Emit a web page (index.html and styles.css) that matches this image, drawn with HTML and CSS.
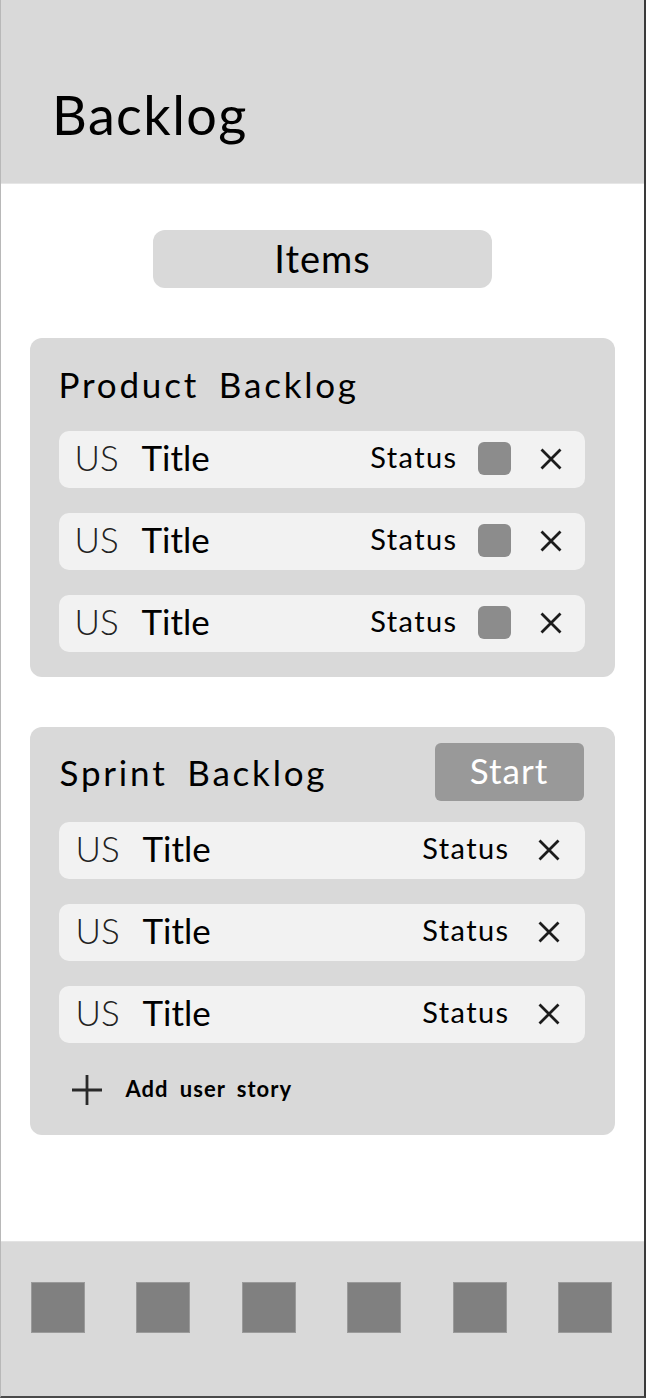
FILE: index.html
```html
<!DOCTYPE html>
<html lang="en">
<head>
<meta charset="utf-8">
<title>Backlog</title>
<link rel="stylesheet" href="styles.css">
</head>
<body>
<div class="frame">
  <header class="topbar">
    <h1 class="page-title">Backlog</h1>
  </header>

  <main class="content">
    <div class="tab-pill">Items</div>

    <section class="card product">
      <h2 class="card-title">Product Backlog</h2>
      <div class="rows">
        <div class="row">
          <span class="us">US</span><span class="title">Title</span>
          <span class="status">Status</span><span class="status-box"></span>
          <svg class="close" viewBox="0 0 22 22"><path d="M1.5 1.5L20.5 20.5M20.5 1.5L1.5 20.5"/></svg>
        </div>
        <div class="row">
          <span class="us">US</span><span class="title">Title</span>
          <span class="status">Status</span><span class="status-box"></span>
          <svg class="close" viewBox="0 0 22 22"><path d="M1.5 1.5L20.5 20.5M20.5 1.5L1.5 20.5"/></svg>
        </div>
        <div class="row">
          <span class="us">US</span><span class="title">Title</span>
          <span class="status">Status</span><span class="status-box"></span>
          <svg class="close" viewBox="0 0 22 22"><path d="M1.5 1.5L20.5 20.5M20.5 1.5L1.5 20.5"/></svg>
        </div>
      </div>
    </section>

    <section class="card sprint">
      <div class="card-head">
        <h2 class="card-title">Sprint Backlog</h2>
        <button class="start-btn">Start</button>
      </div>
      <div class="rows">
        <div class="row sprint-row">
          <span class="us">US</span><span class="title">Title</span>
          <span class="status">Status</span>
          <svg class="close" viewBox="0 0 22 22"><path d="M1.5 1.5L20.5 20.5M20.5 1.5L1.5 20.5"/></svg>
        </div>
        <div class="row sprint-row">
          <span class="us">US</span><span class="title">Title</span>
          <span class="status">Status</span>
          <svg class="close" viewBox="0 0 22 22"><path d="M1.5 1.5L20.5 20.5M20.5 1.5L1.5 20.5"/></svg>
        </div>
        <div class="row sprint-row">
          <span class="us">US</span><span class="title">Title</span>
          <span class="status">Status</span>
          <svg class="close" viewBox="0 0 22 22"><path d="M1.5 1.5L20.5 20.5M20.5 1.5L1.5 20.5"/></svg>
        </div>
      </div>
      <div class="add-row">
        <svg class="plus" viewBox="0 0 30 30"><path d="M15 0V30M0 15H30"/></svg>
        <span class="add-label">Add user story</span>
      </div>
    </section>
  </main>

  <nav class="bottom-nav">
    <span class="nav-item"></span>
    <span class="nav-item"></span>
    <span class="nav-item"></span>
    <span class="nav-item"></span>
    <span class="nav-item"></span>
    <span class="nav-item"></span>
  </nav>
</div>
</body>
</html>
```

FILE: styles.css
```css
* { box-sizing: border-box; }

html, body {
  margin: 0;
  padding: 0;
  background: #ffffff;
}

body {
  font-family: "Lato", "Open Sans", sans-serif;
  color: #000;
}

.frame {
  width: 646px;
  height: 1398px;
  display: flex;
  flex-direction: column;
  border-left: 1px solid #b8b8b8;
  border-right: 2px solid #3a3a3a;
  border-bottom: 2px solid #4a4a4a;
  background: #fff;
  overflow: hidden;
}

.topbar {
  height: 184px;
  background: #d9d9d9;
  border-bottom: 1px solid #e6e6e6;
  padding: 88px 0 0 51px;
  flex: none;
}

.page-title {
  margin: 0;
  font-size: 54px;
  line-height: 54px;
  font-weight: 400;
  letter-spacing: 1.4px;
}

.content {
  flex: 1;
  display: flex;
  flex-direction: column;
  align-items: center;
  padding-top: 46px;
}

.tab-pill {
  width: 339px;
  height: 58px;
  border-radius: 12px;
  background: #d9d9d9;
  display: flex;
  align-items: center;
  justify-content: center;
  font-size: 38px;
  font-weight: 400;
  letter-spacing: 1px;
  padding-bottom: 3px;
}

.card {
  width: 585px;
  background: #d9d9d9;
  border-radius: 12px;
  margin-left: -1px;
  padding: 0 30px 0 29px;
}

.product {
  margin-top: 50px;
  padding-top: 24px;
  padding-bottom: 25px;
}

.sprint {
  margin-top: 50px;
  padding-top: 16px;
  padding-bottom: 23px;
}

.card-title {
  margin: 0;
  font-size: 35px;
  line-height: 44px;
  font-weight: 400;
  letter-spacing: 2.8px;
  word-spacing: 8px;
}

.product .card-title {
  margin-bottom: 25px;
}

.card-head {
  display: flex;
  align-items: center;
  justify-content: space-between;
  margin-bottom: 21px;
}

.card-head .card-title {
  padding-left: 1px;
}

.start-btn {
  width: 149px;
  height: 58px;
  border: none;
  border-radius: 6px;
  background: #999999;
  color: #ffffff;
  font-family: inherit;
  font-size: 35px;
  font-weight: 400;
  letter-spacing: 1px;
  padding: 0 0 5px;
  margin-right: 1px;
}

.rows {
  display: flex;
  flex-direction: column;
  gap: 25px;
}

.row {
  height: 57px;
  background: #f2f2f2;
  border-radius: 10px;
  display: flex;
  align-items: center;
  padding: 0 23px 2px 16px;
}

.row > span {
  position: relative;
  top: -2px;
}

.row > .status-box {
  top: 0;
}

.sprint-row {
  padding: 0 25px 2px 17px;
}

.us {
  width: 67px;
  font-size: 35px;
  font-weight: 300;
  color: #222;
}

.title {
  flex: 1;
  font-size: 35px;
  font-weight: 400;
}

.status {
  font-size: 29px;
  font-weight: 400;
  letter-spacing: 1.4px;
}

.status-box {
  width: 33px;
  height: 33px;
  border-radius: 6px;
  background: #8c8c8c;
  margin-left: 20px;
}

.close {
  width: 22px;
  height: 22px;
  margin-left: 29px;
  fill: none;
  stroke: #1c1c1c;
  stroke-width: 2.8;
}

.sprint-row .close {
  margin-left: 28px;
}

.add-row {
  display: flex;
  align-items: center;
  height: 44px;
  margin-top: 25px;
  padding-left: 13px;
}

.plus {
  width: 30px;
  height: 30px;
  fill: none;
  stroke: #2a2a2a;
  stroke-width: 2.8;
}

.add-label {
  margin-left: 24px;
  font-size: 22px;
  font-weight: 700;
  word-spacing: 5px;
  letter-spacing: 1px;
  position: relative;
  top: -2px;
}

.bottom-nav {
  flex: none;
  height: 155px;
  background: #d9d9d9;
  border-top: 1px solid #e3e3e3;
  display: flex;
  justify-content: space-between;
  padding: 40px 32px 0 30px;
}

.nav-item {
  width: 54px;
  height: 51px;
  background: #808080;
  border: 1px solid #9a9a9a;
}
```
